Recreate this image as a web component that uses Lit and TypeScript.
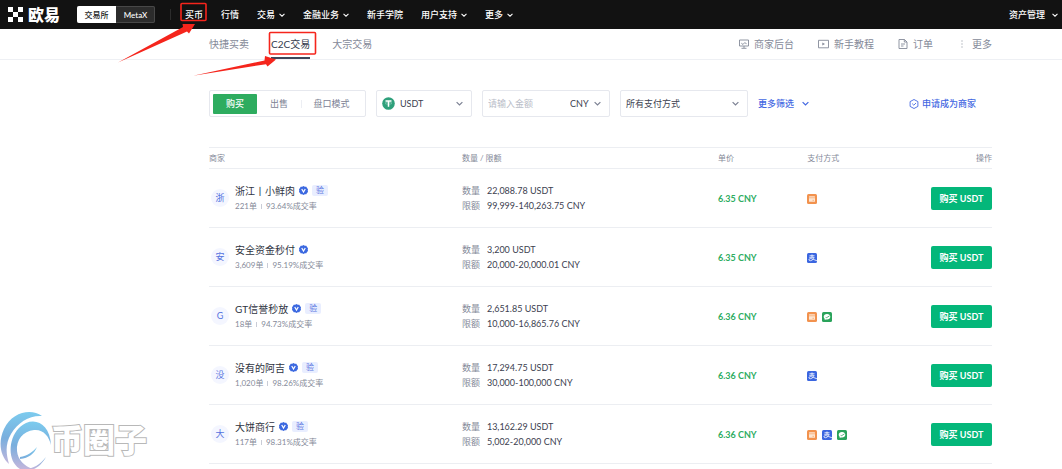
import { LitElement, html, css, svg } from "lit";
import { customElement, property, state } from "lit/decorators.js";
import { classMap } from "lit/directives/class-map.js";

type Pay = "bank" | "alipay" | "wechat";

interface Offer {
  initial: string;
  name: string;
  verified: boolean;
  orders: string;
  rate: string;
  amount: string;
  limit: string;
  price: string;
  pays: Pay[];
}

const OFFERS: Offer[] = [
  { initial: "浙", name: "浙江丨小鲜肉", verified: true, orders: "221", rate: "93.64", amount: "22,088.78", limit: "99,999-140,263.75", price: "6.35", pays: ["bank"] },
  { initial: "安", name: "安全资金秒付", verified: false, orders: "3,609", rate: "95.19", amount: "3,200", limit: "20,000-20,000.01", price: "6.35", pays: ["alipay"] },
  { initial: "G", name: "GT信誉秒放", verified: true, orders: "18", rate: "94.73", amount: "2,651.85", limit: "10,000-16,865.76", price: "6.36", pays: ["bank", "wechat"] },
  { initial: "没", name: "没有的阿吉", verified: true, orders: "1,020", rate: "98.26", amount: "17,294.75", limit: "30,000-100,000", price: "6.36", pays: ["alipay"] },
  { initial: "大", name: "大饼商行", verified: true, orders: "117", rate: "98.31", amount: "13,162.29", limit: "5,002-20,000", price: "6.36", pays: ["bank", "alipay", "wechat"] },
];

const NAV = [
  { label: "买币", menu: false },
  { label: "行情", menu: false },
  { label: "交易", menu: true },
  { label: "金融业务", menu: true },
  { label: "新手学院", menu: false },
  { label: "用户支持", menu: true },
  { label: "更多", menu: true },
];

const reset = css`
  * {
    box-sizing: border-box;
  }
  a {
    color: inherit;
    text-decoration: none;
  }
  button,
  input,
  select {
    font: inherit;
    color: inherit;
    margin: 0;
    padding: 0;
    border: 0;
    background: none;
    outline: none;
    appearance: none;
  }
  button {
    cursor: pointer;
  }
  svg {
    display: block;
    flex: none;
  }
`;

const chevron = (size: number) => html`<svg width=${size} height=${size} viewBox="0 0 8 8" fill="none" stroke="currentColor" stroke-width="1.4" aria-hidden="true"><path d="M.7 2.400 4 5.600 7.300 2.400" /></svg>`;

@customElement("pay-icon")
export class PayIcon extends LitElement {
  @property() kind: Pay = "bank";

  static styles = css`
    :host {
      display: block;
    }
    svg {
      display: block;
    }
  `;

  render() {
    const art = {
      bank: svg`<rect width="20" height="20" rx="3" fill="#f2924e"/><rect x="4" y="4.5" width="12" height="11" rx="1" fill="#fde6d3"/><path d="M4 7.6h12" stroke="#f2924e" stroke-width="1.2"/><path d="M11 12.6h3" stroke="#f2924e" stroke-width="1.2"/>`,
      alipay: svg`<rect width="20" height="20" rx="3" fill="#3b66e0"/><path d="M5 5.5h10M10 3v5.600M4.500 8.600h9.800c-.8 3-4 6.800-7.400 6.800-4.200 0-3.600-4.200-.2-4.200 3.700 0 7.200 2.300 13.300 4.400" fill="none" stroke="#fff" stroke-width="1.600"/>`,
      wechat: svg`<rect width="20" height="20" rx="3" fill="#2aa35b"/><path d="M10 4.200c4 0 6.600 2.400 6.600 5.500S14 15.200 10 15.200c-.8 0-1.600-.1-2.300-.3l-2.600 1.300.6-2.200C4.200 13 3.400 11.500 3.400 9.700c0-3.100 2.600-5.500 6.600-5.500z" fill="#fff"/><path d="M7 9.800l1.800 1.800L15 7.800" fill="none" stroke="#2aa35b" stroke-width="1.500"/>`,
    }[this.kind];
    return html`<svg width="10" height="10" viewBox="0 0 20 20" aria-hidden="true">${art}</svg>`;
  }
}

@customElement("site-header")
export class SiteHeader extends LitElement {
  static styles = [
    reset,
    css`
      :host {
        display: flex;
        align-items: center;
        height: 29px;
        padding: 0 4px 0 8px;
        background: #121212;
        color: #fff;
        font-size: 9px;
        line-height: 14px;
        font-weight: 500;
      }
      .logo {
        display: flex;
        align-items: center;
        gap: 5px;
        font-size: 16px;
        line-height: 24px;
        font-weight: 900;
      }
      .switch {
        display: flex;
        height: 17px;
        margin-left: 17px;
        border-radius: 2px;
        background: #2c2c2c;
        box-shadow: inset 0 0 0 1px #484848;
        font-size: 8px;
        overflow: hidden;
      }
      .switch button {
        width: 39px;
      }
      .switch .on {
        background: #fff;
        color: #222;
      }
      .rule {
        width: 1px;
        height: 11px;
        margin: 0 14px 0 15px;
        background: #2c2c2c;
      }
      nav {
        display: flex;
        gap: 18px;
      }
      .item {
        display: flex;
        align-items: center;
        gap: 4px;
        white-space: nowrap;
      }
      .assets {
        margin-left: auto;
        gap: 7px;
      }
    `,
  ];

  render() {
    return html`
      <a class="logo" href="#">
        <svg width="15" height="15" viewBox="0 0 15 15" fill="#fff" aria-hidden="true">
          <path d="M0 0h5v5H0zM10 0h5v5h-5zM5 5h5v5H5zM0 10h5v5H0zM10 10h5v5h-5z" />
        </svg>
        <span>欧易</span>
      </a>
      <div class="switch">
        <button class="on">交易所</button>
        <button>MetaX</button>
      </div>
      <span class="rule"></span>
      <nav>
        ${NAV.map((n) => html`<a class="item" href="#">${n.label}${n.menu ? chevron(6) : null}</a>`)}
      </nav>
      <a class="item assets" href="#">资产管理${chevron(6)}</a>
    `;
  }
}

@customElement("sub-nav")
export class SubNav extends LitElement {
  static styles = [
    reset,
    css`
      :host {
        display: flex;
        justify-content: space-between;
        height: 31px;
        padding: 0 70px 0 209px;
        border-bottom: 1px solid #eef0f4;
        box-sizing: border-box;
        color: #858a99;
        font-size: 10px;
        line-height: 31px;
        white-space: nowrap;
      }
      .tabs,
      .links {
        display: flex;
      }
      .tabs {
        gap: 22px;
      }
      .links {
        gap: 24px;
      }
      .on {
        color: #333a4c;
        box-shadow: inset 0 -2px #3d4559;
      }
      .links a {
        display: flex;
        align-items: center;
        gap: 5px;
      }
    `,
  ];

  render() {
    return html`
      <nav class="tabs">
        <a href="#">快捷买卖</a>
        <a class="on" href="#" aria-current="page">C2C交易</a>
        <a href="#">大宗交易</a>
      </nav>
      <nav class="links">
        <a href="#">
          <svg width="10" height="10" viewBox="0 0 10 10" fill="none" stroke="currentColor" stroke-width=".9" aria-hidden="true">
            <path d="M.5 1h9v6h-9zM2.500 9.300h5M5 7v2M2.300 4.200l1.700 1.300 1.600-1.800 2 1" />
          </svg>
          商家后台
        </a>
        <a href="#">
          <svg width="11" height="10" viewBox="0 0 11 10" aria-hidden="true">
            <path d="M.5 1.300h10v7.500H.5z" fill="none" stroke="currentColor" stroke-width=".9" />
            <path d="M4.300 3.400v3.200L7 5z" fill="currentColor" />
          </svg>
          新手教程
        </a>
        <a href="#">
          <svg width="10" height="10" viewBox="0 0 10 10" fill="none" stroke="currentColor" stroke-width=".9" aria-hidden="true">
            <path d="M1 .5h5.500L9 3v6.500H1zM6.300.5V3H9M3 5h4M3 7h2.500" />
          </svg>
          订单
        </a>
        <a href="#">
          <svg width="10" height="10" viewBox="0 0 10 10" fill="currentColor" aria-hidden="true">
            <path d="M4.500 1.500h1v1h-1zM4.500 4.500h1v1h-1zM4.500 7.500h1v1h-1z" />
          </svg>
          更多
        </a>
      </nav>
    `;
  }
}

@customElement("filter-bar")
export class FilterBar extends LitElement {
  @state() private mode = "购买";

  static styles = [
    reset,
    css`
      :host {
        display: flex;
        align-items: center;
        gap: 10px;
        padding-right: 16px;
        color: #3c4150;
        font-size: 9px;
        line-height: 14px;
        white-space: nowrap;
      }
      .modes,
      .box {
        display: flex;
        align-items: center;
        height: 27px;
        border: 1px solid #e6e8ee;
        border-radius: 2px;
      }
      .modes {
        width: 157px;
        padding: 0 3px;
        color: #7d8294;
      }
      .modes button {
        height: 20px;
        width: 44px;
        border-radius: 1px;
      }
      .modes .wide {
        width: 61px;
        background: linear-gradient(#eceef3, #eceef3) left center / 1px 8px no-repeat;
      }
      .modes .on {
        background: #2eac5f;
        color: #fff;
        font-weight: 500;
      }
      .box {
        width: 128px;
        padding: 0 8px 0 5px;
        gap: 5px;
      }
      .coin {
        width: 96px;
      }
      .box select,
      .box input {
        flex: 1;
        min-width: 0;
        height: 20px;
      }
      .box .unit {
        flex: none;
        width: 19px;
      }
      .box svg {
        pointer-events: none;
        color: #7d8294;
      }
      input::placeholder {
        color: #b9bdc8;
        opacity: 1;
      }
      .link {
        display: flex;
        align-items: center;
        gap: 8px;
        color: #4468e2;
        font-weight: 500;
      }
      .apply {
        margin-left: auto;
        gap: 3px;
      }
    `,
  ];

  render() {
    return html`
      <div class="modes">
        ${["购买", "出售", "盘口模式"].map(
          (m) => html`<button
            class=${classMap({ on: this.mode === m, wide: m.length > 2 })}
            @click=${() => (this.mode = m)}
          >${m}</button>`
        )}
      </div>
      <div class="box coin">
        <svg width="13" height="13" viewBox="0 0 13 13" aria-hidden="true">
          <circle cx="6.500" cy="6.500" r="6.300" fill="#2ea07b" />
          <path d="M3.500 4h6M6.500 4v5.800" stroke="#fff" stroke-width="1.500" />
          <ellipse cx="6.500" cy="6.200" rx="3.500" ry="1" fill="none" stroke="#fff" stroke-width=".3" />
        </svg>
        <select aria-label="币种"><option>USDT</option></select>
        ${chevron(7)}
      </div>
      <div class="box">
        <input type="text" placeholder="请输入金额" aria-label="请输入金额" />
        <select class="unit" aria-label="法币"><option>CNY</option></select>
        ${chevron(7)}
      </div>
      <div class="box">
        <select aria-label="支付方式"><option>所有支付方式</option></select>
        ${chevron(7)}
      </div>
      <button class="link">更多筛选${chevron(7)}</button>
      <a class="link apply" href="#">
        <svg width="10" height="10" viewBox="0 0 10 10" fill="none" stroke="currentColor" stroke-width=".9" aria-hidden="true">
          <path d="M5 .5 8.900 2.600v4.800L5 9.500 1.100 7.400V2.600zM3.200 4.600 4.800 6.200 7 4" />
        </svg>
        申请成为商家
      </a>
    `;
  }
}

@customElement("offer-table")
export class OfferTable extends LitElement {
  static styles = [
    reset,
    css`
      :host {
        display: block;
        margin-top: 30px;
        color: #3c4150;
        font-size: 9px;
        line-height: 15px;
        white-space: nowrap;
      }
      table {
        width: 100%;
        table-layout: fixed;
        border-spacing: 0;
      }
      th,
      td {
        padding: 0;
        text-align: left;
        border-bottom: 1px solid #eceef2;
      }
      th {
        height: 22px;
        border-top: 1px solid #eceef2;
        color: #858a99;
        font-size: 8px;
        line-height: 12px;
        font-weight: 400;
      }
      td {
        height: 59px;
      }
      .c1 {
        width: 32.3%;
      }
      .c2 {
        width: 32.7%;
      }
      .c3 {
        width: 11.4%;
      }
      .last {
        text-align: right;
      }
      .merchant,
      .name,
      .stats,
      .pays,
      .pair {
        display: flex;
        align-items: center;
      }
      .merchant {
        padding-left: 2px;
        gap: 6px;
      }
      .avatar {
        width: 18px;
        height: 18px;
        border-radius: 50%;
        background: #f4f6ff;
        color: #5573e0;
        line-height: 18px;
        text-align: center;
      }
      .name {
        gap: 4px;
        font-size: 10px;
        line-height: 16px;
        color: #2f3442;
      }
      .tag {
        padding: 0 4px;
        border-radius: 2px;
        background: #e9eeff;
        color: #5573e0;
        font-size: 8px;
        line-height: 11px;
      }
      .stats {
        gap: 4px;
        color: #858a99;
        font-size: 8px;
      }
      .bar {
        width: 1px;
        height: 5px;
        background: #c9ccd6;
      }
      .pair {
        gap: 7px;
      }
      .pair span {
        color: #858a99;
      }
      .price {
        color: #2eac5f;
        font-weight: 700;
      }
      .pays {
        gap: 5px;
        padding-top: 2px;
      }
      .buy {
        width: 61px;
        height: 23px;
        border-radius: 2px;
        background: #04b77a;
        color: #fff;
        font-weight: 700;
      }
    `,
  ];

  render() {
    return html`
      <table>
        <thead>
          <tr>
            <th class="c1">商家</th>
            <th class="c2">数量 / 限额</th>
            <th class="c3">单价</th>
            <th>支付方式</th>
            <th class="last">操作</th>
          </tr>
        </thead>
        <tbody>
          ${OFFERS.map(
            (o) => html`<tr>
              <td>
                <div class="merchant">
                  <span class="avatar">${o.initial}</span>
                  <div>
                    <div class="name">
                      <span>${o.name}</span>
                      <svg width="9" height="9" viewBox="0 0 18 18" aria-hidden="true">
                        <path d="M9 0l2.600 1.500h3l1.400 2.700 2 2.300L17.500 9l.5 2.800-2 2-1.400 2.700h-3L9 18l-2.600-1.500h-3L2 13.800l-2-2L.5 9 0 6.500l2-2.300 1.400-2.700h3z" fill="#3c69e0" />
                        <path d="M5.500 6 9 12l3.500-6" fill="none" stroke="#fff" stroke-width="2.400" />
                      </svg>
                      ${o.verified ? html`<span class="tag">验</span>` : null}
                    </div>
                    <div class="stats">
                      <span>${o.orders}单</span><i class="bar"></i><span>${o.rate}%成交率</span>
                    </div>
                  </div>
                </div>
              </td>
              <td>
                <div class="pair"><span>数量</span>${o.amount} USDT</div>
                <div class="pair"><span>限额</span>${o.limit} CNY</div>
              </td>
              <td class="price">${o.price} CNY</td>
              <td>
                <div class="pays">${o.pays.map((p) => html`<pay-icon .kind=${p}></pay-icon>`)}</div>
              </td>
              <td class="last"><button class="buy">购买 USDT</button></td>
            </tr>`
          )}
        </tbody>
      </table>
    `;
  }
}

@customElement("app-root")
export class AppRoot extends LitElement {
  static styles = css`
    :host {
      display: block;
      position: relative;
      min-height: 100vh;
      overflow: hidden;
      background: #fff;
      font-family: Lato, "Noto Sans CJK SC", sans-serif;
    }
    main {
      padding: 30px 70px 0 209px;
    }
    .marks {
      position: absolute;
      top: 0;
      left: 0;
      pointer-events: none;
    }
    .watermark {
      position: absolute;
      left: 0;
      bottom: 0;
      display: flex;
      align-items: center;
      pointer-events: none;
      font-size: 32px;
      line-height: 58px;
      font-weight: 900;
      color: #fff;
      -webkit-text-stroke: 2px #b8b8b8;
      paint-order: stroke fill;
    }
  `;

  render() {
    return html`
      <site-header></site-header>
      <sub-nav></sub-nav>
      <main>
        <filter-bar></filter-bar>
        <offer-table></offer-table>
      </main>
      <svg class="marks" width="330" height="84" viewBox="0 0 330 84" aria-hidden="true">
        <g fill="none" stroke="#f5251c" stroke-width="1.600">
          <rect x="181" y="3.500" width="25" height="17" rx="1" />
          <rect x="269.500" y="32.500" width="46" height="21.500" rx="1" />
        </g>
        <g fill="#f5251c">
          <path d="M118 62.500 183 27 182.500 24 195 24 189 33.500 187 31.500z" />
          <path d="M193 75.800 264.500 60.500 265 56 276 59.500 267.500 66.500 266 64.200z" />
        </g>
      </svg>
      <div class="watermark">
        <svg width="51" height="58" viewBox="0 0 51 58" aria-hidden="true">
          <defs>
            <linearGradient id="wm" x1="0" y1="0" x2="0" y2="1">
              <stop offset="0" stop-color="#7ccbee" />
              <stop offset=".5" stop-color="#79aedd" />
              <stop offset="1" stop-color="#c3b6dc" />
            </linearGradient>
          </defs>
          <g fill="url(#wm)">
            <path d="M42 5C31-3 12 1 4 18-2 31 0 45 9 53 6 43 5 33 11 23 18 11 30 4 42 5z" />
            <path d="M51 34C50 15 38 7 26 12 11 19 7 40 14 52c2 3 4 5 6 6h13c-9-3-15-9-16-18-1-11 6-20 17-21 9-1 15 6 17 15z" />
            <path d="M20 46c7-1 13-5 17-10-3 7-8 11-17 12zM24 58c9 0 16-4 22-12-4 7-8 10-12 12z" />
          </g>
        </svg>
        <span>币圈子</span>
      </div>
    `;
  }
}
